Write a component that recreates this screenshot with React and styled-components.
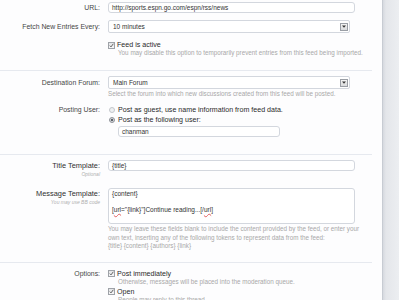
import React from "react";
import styled, { createGlobalStyle } from "styled-components";

const GlobalStyle = createGlobalStyle`
	body {
		margin: 0;
		background: #fdfdfe;
		font-family: "Liberation Sans", Arial, sans-serif;
	}
`;

const Page = styled.div`
	display: flex;
	width: 399px;
	height: 300px;
	overflow: hidden;
`;

const Main = styled.div`
	flex: 1;
	display: flex;
	flex-direction: column;
	background: #fdfdfe;
`;

const Side = styled.div`
	width: 17px;
	background: linear-gradient(
		to right,
		#b9bec6 0,
		#d6d9df 1px,
		#e4e6ea 4px,
		#eceef1 100%
	);
`;

const Fieldset = styled.div`
	margin-right: 10px;
	padding-top: ${(props) => props.top}px;
	padding-bottom: ${(props) => props.bottom}px;
	border-bottom: ${(props) => (props.last ? "none" : "1px solid #e6e9ef")};
`;

const Row = styled.div`
	display: grid;
	grid-template-columns: 108px 1fr;
	align-items: start;
	margin-top: ${(props) => props.gap || 0}px;
`;

const LabelCell = styled.div`
	display: flex;
	flex-direction: column;
	align-items: flex-end;
	padding-right: 8px;
`;

const Label = styled.div`
	font-size: ${(props) => (props.big ? 7.4 : 6.9)}px;
	line-height: ${(props) => props.lh || 13}px;
	color: ${(props) => (props.big ? "#2f2f2f" : "#454545")};
	white-space: nowrap;
`;

const LabelHint = styled.div`
	font-size: 5px;
	line-height: 6px;
	font-style: italic;
	color: #b0b0b0;
	white-space: nowrap;
`;

const Controls = styled.div`
	display: flex;
	flex-direction: column;
	align-items: flex-start;
`;

const TextBox = styled.div`
	box-sizing: border-box;
	width: ${(props) => props.width}px;
	height: ${(props) => props.height || 11}px;
	margin-left: ${(props) => props.indent || 0}px;
	margin-top: ${(props) => props.gap || 0}px;
	padding: 0 3px;
	border: 1px solid #d3d7de;
	border-radius: 3px;
	background: #ffffff;
	font-size: 6.5px;
	line-height: 9px;
	color: #333;
	white-space: nowrap;
	overflow: hidden;
`;

const TextArea = styled.div`
	box-sizing: border-box;
	width: 247px;
	height: 36px;
	padding: 1px 3px 0;
	border: 1px solid #d3d7de;
	border-radius: 3px;
	background: #ffffff;
	font-size: 6.5px;
	line-height: 8px;
	color: #333;
	white-space: nowrap;
`;

const Squiggle = styled.span`
	text-decoration: underline wavy #e06060;
	text-decoration-thickness: 0.5px;
`;

const SelectBox = styled.div`
	box-sizing: border-box;
	width: 242px;
	height: 13px;
	margin-top: ${(props) => props.gap || 0}px;
	display: flex;
	align-items: center;
	justify-content: space-between;
	padding: 0 1px 0 4px;
	border: 1px solid #d3d7de;
	border-radius: 2px;
	background: #ffffff;
	font-size: 6.5px;
	color: #333;
`;

const SelectArrow = styled.span`
	box-sizing: border-box;
	width: 8px;
	height: 8px;
	display: flex;
	align-items: center;
	justify-content: center;
	border: 1px solid #9a9ea5;
	background: linear-gradient(#f4f4f4, #d9dadc);
`;

const Hint = styled.div`
	font-size: 6.3px;
	line-height: ${(props) => props.lh || 8}px;
	margin-top: ${(props) => props.gap || 0}px;
	margin-left: ${(props) => props.indent || 0}px;
	color: #a8a8a8;
	white-space: nowrap;
`;

const Choice = styled.div`
	display: flex;
	align-items: center;
	height: 8px;
	margin-top: ${(props) => props.gap || 0}px;
	font-size: 7.1px;
	color: #2a2a2a;
	white-space: nowrap;
`;

const CheckBox = styled.span`
	box-sizing: border-box;
	width: 7px;
	height: 7px;
	margin-right: 2px;
	display: flex;
	align-items: center;
	justify-content: center;
	border: 1px solid #9ea2a8;
	background: linear-gradient(#e4e5e7, #f6f6f7);
`;

const Radio = styled.span`
	box-sizing: border-box;
	width: 6px;
	height: 6px;
	margin: 0 3px 0 1px;
	border-radius: 50%;
	border: 1px solid ${(props) => (props.on ? "#8d9198" : "#c3c6cb")};
	background: ${(props) =>
		props.on
			? "radial-gradient(circle, #5f636a 0, #5f636a 1.2px, #d8dadd 1.6px)"
			: "#eef0f2"};
`;

const Check = () => (
	<CheckBox>
		<svg width="5" height="5" viewBox="0 0 5 5">
			<path d="M0.8 2.6 L2 3.9 L4.3 0.8" fill="none" stroke="#555" strokeWidth="0.9" />
		</svg>
	</CheckBox>
);

const Arrow = () => (
	<SelectArrow>
		<svg width="4" height="3" viewBox="0 0 4 3">
			<path d="M0 0.5 H4 L2 2.8 Z" fill="#333" />
		</svg>
	</SelectArrow>
);

const App = () => {
	return (
		<Page>
			<GlobalStyle />
			<Main>
				<Fieldset top={2} bottom={13}>
					<Row>
						<LabelCell>
							<Label lh={11}>URL:</Label>
						</LabelCell>
						<Controls>
							<TextBox width={247}>http://sports.espn.go.com/espn/rss/news</TextBox>
						</Controls>
					</Row>
					<Row gap={7}>
						<LabelCell>
							<Label>Fetch New Entries Every:</Label>
						</LabelCell>
						<Controls>
							<SelectBox>
								10 minutes
								<Arrow />
							</SelectBox>
						</Controls>
					</Row>
					<Row gap={8}>
						<LabelCell />
						<Controls>
							<Choice>
								<Check />
								Feed is active
							</Choice>
							<Hint indent={10}>
								You may disable this option to temporarily prevent entries from this feed being imported.
							</Hint>
						</Controls>
					</Row>
				</Fieldset>

				<Fieldset top={5} bottom={17}>
					<Row>
						<LabelCell>
							<Label>Destination Forum:</Label>
						</LabelCell>
						<Controls>
							<SelectBox>
								Main Forum
								<Arrow />
							</SelectBox>
							<Hint gap={1} lh={7}>
								Select the forum into which new discussions created from this feed will be posted.
							</Hint>
						</Controls>
					</Row>
					<Row gap={9}>
						<LabelCell>
							<Label lh={8}>Posting User:</Label>
						</LabelCell>
						<Controls>
							<Choice>
								<Radio />
								Post as guest, use name information from feed data.
							</Choice>
							<Choice gap={2}>
								<Radio on />
								Post as the following user:
							</Choice>
							<TextBox width={162} indent={10} gap={2}>
								chanman
							</TextBox>
						</Controls>
					</Row>
				</Fieldset>

				<Fieldset top={5} bottom={11}>
					<Row>
						<LabelCell>
							<Label big lh={11}>Title Template:</Label>
							<LabelHint>Optional</LabelHint>
						</LabelCell>
						<Controls>
							<TextBox width={247}>{"{title}"}</TextBox>
						</Controls>
					</Row>
					<Row gap={11}>
						<LabelCell>
							<Label big lh={11}>Message Template:</Label>
							<LabelHint>You may use BB code</LabelHint>
						</LabelCell>
						<Controls>
							<TextArea>
								<div>{"{content}"}</div>
								<div>&nbsp;</div>
								<div>
									[<Squiggle>url</Squiggle>="{"{link}"}"]Continue reading...[/<Squiggle>url</Squiggle>]
								</div>
							</TextArea>
							<Hint gap={1} lh={8.5}>
								You may leave these fields blank to include the content provided by the feed, or enter your
								<br />
								own text, inserting any of the following tokens to represent data from the feed:
								<br />
								{"{title} {content} {authors} {link}"}
							</Hint>
						</Controls>
					</Row>
				</Fieldset>

				<Fieldset top={7} bottom={0} last>
					<Row>
						<LabelCell>
							<Label lh={8}>Options:</Label>
						</LabelCell>
						<Controls>
							<Choice>
								<Check />
								Post immediately
							</Choice>
							<Hint indent={10}>Otherwise, messages will be placed into the moderation queue.</Hint>
							<Choice gap={2}>
								<Check />
								Open
							</Choice>
							<Hint indent={10}>People may reply to this thread</Hint>
						</Controls>
					</Row>
				</Fieldset>
			</Main>
			<Side />
		</Page>
	);
};

export default App;
